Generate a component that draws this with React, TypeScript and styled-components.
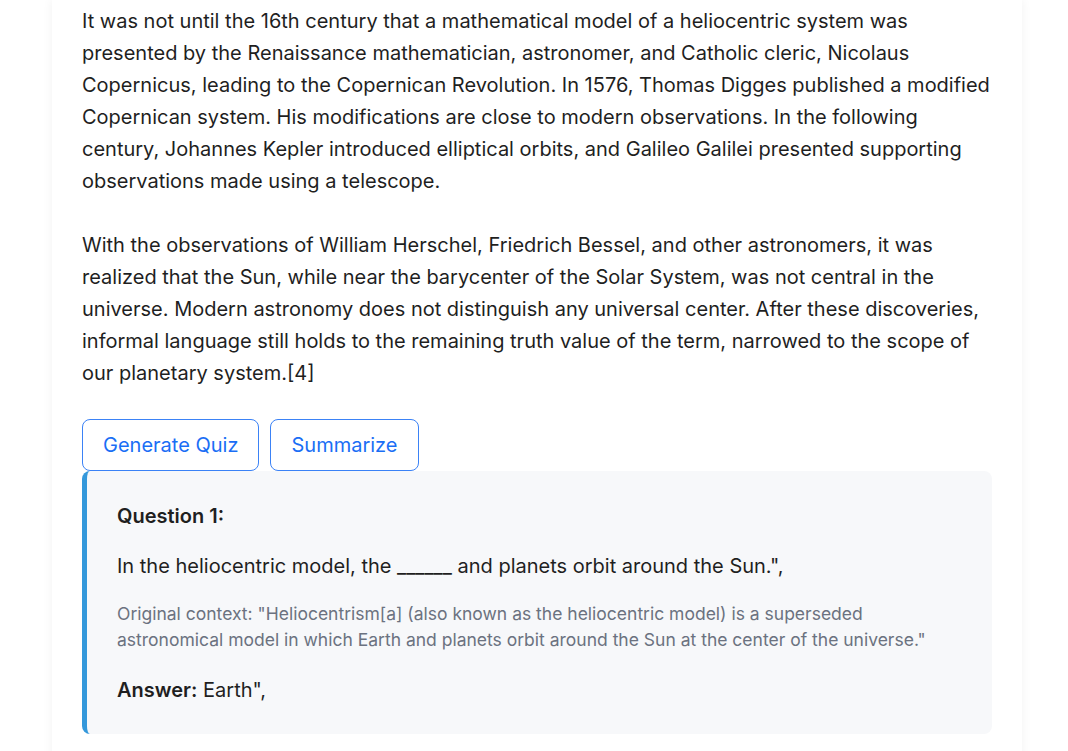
import styled, { createGlobalStyle } from "styled-components";

const GlobalStyle = createGlobalStyle`
  body {
    margin: 0;
    background: #ffffff;
    font-family: Inter, "Noto Sans", sans-serif;
    color: #1f1f1f;
  }
`;

const Page = styled.div`
  display: flex;
  padding-left: 52px;
`;

const Card = styled.main`
  width: 970px;
  box-sizing: border-box;
  background: #ffffff;
  padding: 5px 30px 40px;
  box-shadow: 0 0 10px rgba(0, 0, 0, 0.06);
`;

const Paragraph = styled.p<{ last?: boolean }>`
  margin: 0 0 ${(p) => (p.last ? "0" : "32px")};
  font-size: 20px;
  line-height: 32px;
  color: #1f1f1f;
`;

const Actions = styled.div`
  display: flex;
  gap: 11px;
  margin-top: 30px;
`;

const ActionButton = styled.button`
  height: 52px;
  padding: 0 20px;
  background: #ffffff;
  border: 1px solid #3b82f6;
  border-radius: 8px;
  color: #1a6ef5;
  font-family: Inter, "Noto Sans", sans-serif;
  font-size: 20px;
  cursor: pointer;
`;

const QuizBox = styled.section`
  background: #f7f8fa;
  border-left: 5px solid #3498db;
  border-radius: 8px;
  padding: 30px 30px 29px;
`;

const QuestionTitle = styled.h3`
  margin: 0 0 20px;
  font-size: 20px;
  line-height: 30px;
  font-weight: 600;
  color: #1f1f1f;
`;

const QuestionText = styled.p`
  margin: 0 0 20px;
  font-size: 20px;
  line-height: 30px;
`;

const Context = styled.p`
  margin: 0 0 21px;
  font-size: 17.5px;
  line-height: 26.4px;
  color: #6b7280;
`;

const Answer = styled.p`
  margin: 0;
  font-size: 20px;
  line-height: 30px;
  strong {
    font-weight: 600;
  }
`;

function App() {
  return (
    <>
      <GlobalStyle />
      <Page>
        <Card>
          <Paragraph>
            It was not until the 16th century that a mathematical model of a
            heliocentric system was presented by the Renaissance mathematician,
            astronomer, and Catholic cleric, Nicolaus Copernicus, leading to the
            Copernican Revolution. In 1576, Thomas Digges published a modified
            Copernican system. His modifications are close to modern
            observations. In the following century, Johannes Kepler introduced
            elliptical orbits, and Galileo Galilei presented supporting
            observations made using a telescope.
          </Paragraph>
          <Paragraph last>
            With the observations of William Herschel, Friedrich Bessel, and
            other astronomers, it was realized that the Sun, while near the
            barycenter of the Solar System, was not central in the universe.
            Modern astronomy does not distinguish any universal center. After
            these discoveries, informal language still holds to the remaining
            truth value of the term, narrowed to the scope of our planetary
            system.[4]
          </Paragraph>
          <Actions>
            <ActionButton>Generate Quiz</ActionButton>
            <ActionButton>Summarize</ActionButton>
          </Actions>
          <QuizBox>
            <QuestionTitle>Question 1:</QuestionTitle>
            <QuestionText>
              In the heliocentric model, the ______ and planets orbit around the
              Sun.",
            </QuestionText>
            <Context>
              Original context: "Heliocentrism[a] (also known as the
              heliocentric model) is a superseded astronomical model in which
              Earth and planets orbit around the Sun at the center of the
              universe."
            </Context>
            <Answer>
              <strong>Answer:</strong> Earth",
            </Answer>
          </QuizBox>
        </Card>
      </Page>
    </>
  );
}

export default App;
